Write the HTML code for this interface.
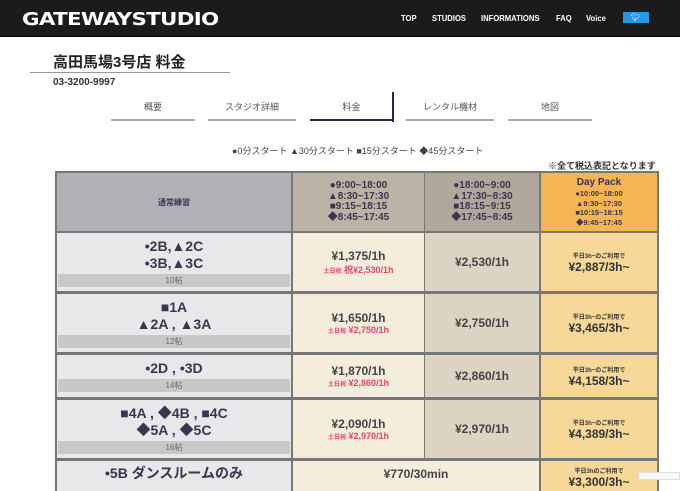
<!DOCTYPE html>
<html><head><meta charset="utf-8"><style>
*{margin:0;padding:0;box-sizing:border-box}
body{width:680px;height:480px;overflow:hidden;background:#fff;position:relative;font-family:"Liberation Sans","Noto Sans CJK JP",sans-serif;color:#3a3550}
.a{position:absolute}
.hdr{left:0;top:0;width:680px;height:37px;background:#1b1b1b;border-bottom:1px solid #000}
.logo{left:22px;top:9px;color:#fff;font-weight:bold;font-size:18px;letter-spacing:-0.6px;transform:scaleX(1.19);transform-origin:left;font-family:"DejaVu Sans",sans-serif}
.nav{top:13px;color:#fff;font-size:8.5px;font-weight:bold;transform:scaleX(0.9);transform-origin:left}
.tab{top:100px;height:21px;border-bottom:2px solid #aaa;font-size:9px;text-align:center;color:#555}
.c{position:absolute;display:flex;flex-direction:column;align-items:center;justify-content:center;text-align:center}
.b{font-weight:bold}
.p{font-size:12px;font-weight:bold;color:#444}
.red{color:#e8426a;font-size:9px;font-weight:bold}
.sm{font-size:6px}
.tat{background:#c8c8c8;color:#666;font-size:8px;width:232px;height:13px;line-height:13px;margin-top:2px;font-weight:normal}
.rn{font-size:14px;line-height:17px;font-weight:bold}
.dp{font-size:12px;font-weight:bold;color:#333}
</style></head><body>
<div class="a hdr"></div>
<div class="a logo">GATEWAYSTUDIO</div>
<div class="a nav" style="left:401px">TOP</div>
<div class="a nav" style="left:432px">STUDIOS</div>
<div class="a nav" style="left:481px">INFORMATIONS</div>
<div class="a nav" style="left:556px">FAQ</div>
<div class="a nav" style="left:586px">Voice</div>
<div class="a" style="left:623px;top:12px;width:26px;height:11px;background:#1f9be8;color:#fff;font-size:8px;text-align:center;line-height:11px">🐦︎</div>

<div class="a" style="left:53px;top:51px;font-size:15px;color:#222;font-weight:bold">高田馬場3号店 料金</div>
<div class="a" style="left:30px;top:72px;width:200px;height:1px;background:#999"></div>
<div class="a b" style="left:53px;top:77px;font-size:10px;color:#333">03-3200-9997</div>

<div class="a tab" style="left:111px;width:84px">概要</div>
<div class="a tab" style="left:208px;width:88px">スタジオ詳細</div>
<div class="a tab" style="left:310px;width:83px;border-color:#2a2848">料金</div>
<div class="a" style="left:392px;top:92px;width:2px;height:30px;background:#2a2848"></div>
<div class="a tab" style="left:406px;width:88px">レンタル機材</div>
<div class="a tab" style="left:508px;width:84px">地図</div>

<div class="a" style="left:232px;top:144px;font-size:9px;color:#444">●0分スタート ▲30分スタート ■15分スタート ◆45分スタート</div>
<div class="a b" style="left:548px;top:159px;font-size:9px;color:#333">※全て税込表記となります</div>

<div class="a" style="left:55px;top:171px;width:604px;height:320px;background:#777"></div>
<div class="c b" style="left:57px;top:173px;width:234px;height:58px;background:#b1b1b5;font-size:8px">通常練習</div>
<div class="c b" style="left:293px;top:173px;width:131px;height:58px;background:#bcb2a6;font-size:10px;line-height:10.5px">●9:00~18:00<br>▲8:30~17:30<br>■9:15~18:15<br>◆8:45~17:45</div>
<div class="c b" style="left:425px;top:173px;width:114px;height:58px;background:#b0a89c;font-size:10px;line-height:10.5px">●18:00~9:00<br>▲17:30~8:30<br>■18:15~9:15<br>◆17:45~8:45</div>
<div class="c b" style="left:541px;top:173px;width:116px;height:58px;background:#f5b552;font-size:7.5px;line-height:9.5px"><span style="font-size:10px;line-height:12px">Day Pack</span>●10:00~18:00<br>▲9:30~17:30<br>■10:15~18:15<br>◆9:45~17:45</div>

<div class="c rn" style="left:57px;top:233px;width:234px;height:58px;background:#e8e8ea">•2B,▲2C<br>•3B,▲3C<div class="tat">10帖</div></div>
<div class="c p" style="left:293px;top:233px;width:131px;height:58px;background:#f5eddc">¥1,375/1h<span class="red"><span class="sm">土日祝</span> 祝¥2,530/1h</span></div>
<div class="c p" style="left:425px;top:233px;width:114px;height:58px;background:#ddd3c3">¥2,530/1h</div>
<div class="c dp" style="left:541px;top:233px;width:116px;height:58px;background:#f7d898"><span class="sm">平日3h~のご利用で</span>¥2,887/3h~</div>

<div class="c rn" style="left:57px;top:294px;width:234px;height:58px;background:#e8e8ea">■1A<br>▲2A , ▲3A<div class="tat">12帖</div></div>
<div class="c p" style="left:293px;top:294px;width:131px;height:58px;background:#f5eddc">¥1,650/1h<span class="red"><span class="sm">土日祝</span> ¥2,750/1h</span></div>
<div class="c p" style="left:425px;top:294px;width:114px;height:58px;background:#ddd3c3">¥2,750/1h</div>
<div class="c dp" style="left:541px;top:294px;width:116px;height:58px;background:#f7d898"><span class="sm">平日3h~のご利用で</span>¥3,465/3h~</div>

<div class="c rn" style="left:57px;top:355px;width:234px;height:42px;background:#e8e8ea">•2D , •3D<div class="tat">14帖</div></div>
<div class="c p" style="left:293px;top:355px;width:131px;height:42px;background:#f5eddc">¥1,870/1h<span class="red"><span class="sm">土日祝</span> ¥2,860/1h</span></div>
<div class="c p" style="left:425px;top:355px;width:114px;height:42px;background:#ddd3c3">¥2,860/1h</div>
<div class="c dp" style="left:541px;top:355px;width:116px;height:42px;background:#f7d898"><span class="sm">平日3h~のご利用で</span>¥4,158/3h~</div>

<div class="c rn" style="left:57px;top:400px;width:234px;height:58px;background:#e8e8ea">■4A , ◆4B , ■4C<br>◆5A , ◆5C<div class="tat">16帖</div></div>
<div class="c p" style="left:293px;top:400px;width:131px;height:58px;background:#f5eddc">¥2,090/1h<span class="red"><span class="sm">土日祝</span> ¥2,970/1h</span></div>
<div class="c p" style="left:425px;top:400px;width:114px;height:58px;background:#ddd3c3">¥2,970/1h</div>
<div class="c dp" style="left:541px;top:400px;width:116px;height:58px;background:#f7d898"><span class="sm">平日3h~のご利用で</span>¥4,389/3h~</div>

<div class="a rn" style="left:57px;top:461px;width:234px;height:30px;background:#e8e8ea;text-align:center;padding-top:4px">•5B ダンスルームのみ</div>
<div class="a p" style="left:293px;top:461px;width:246px;height:30px;background:#f5eddc;text-align:center;padding-top:6px">¥770/30min</div>
<div class="a dp" style="left:541px;top:461px;width:116px;height:30px;background:#f7d898;text-align:center;padding-top:3px;line-height:10px"><span class="sm">平日3hのご利用で</span><br>¥3,300/3h~</div>
<div class="a" style="left:638px;top:472px;width:42px;height:8px;background:#f8f8f8;border:1px solid #ddd"></div>
</body></html>
